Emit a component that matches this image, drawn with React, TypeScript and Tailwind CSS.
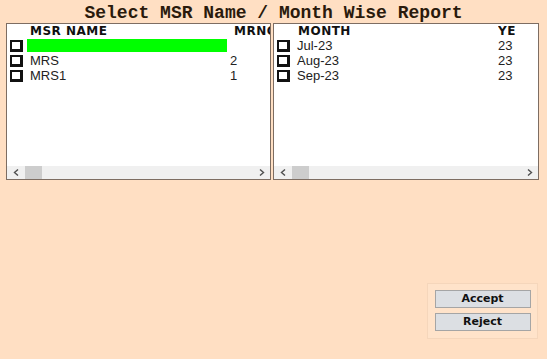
import React from "react";

const Check = () => (
  <div className="w-[13px] h-[12px] shrink-0 bg-white border-2 border-[#111] border-r-[3px] border-b-[3px]" />
);

const ScrollBar = () => (
  <div className="h-[13px] bg-[#f0f0f0] flex items-center">
    <svg width="7" height="7" viewBox="0 0 7 7" className="ml-[6px] shrink-0">
      <path d="M5 0.5 L1.5 3.5 L5 6.5" fill="none" stroke="#505050" strokeWidth="1.4" />
    </svg>
    <div className="h-[13px] bg-[#cdcdcd] w-[17px] ml-[5px] shrink-0" />
    <div className="flex-1" />
    <svg width="7" height="7" viewBox="0 0 7 7" className="mr-[5px] shrink-0">
      <path d="M2 0.5 L5.5 3.5 L2 6.5" fill="none" stroke="#505050" strokeWidth="1.4" />
    </svg>
  </div>
);

const hdr = "font-['DejaVu_Sans',sans-serif] font-bold text-[12px] tracking-[0.5px] text-[#111] leading-[14px] whitespace-nowrap shrink-0";
const cell = "font-['Liberation_Sans',Arial,sans-serif] text-[13px] text-[#222] leading-[15px] whitespace-nowrap";

export default function App() {
  const left = [
    { name: "", val: "", green: true },
    { name: "MRS", val: "2" },
    { name: "MRS1", val: "1" },
  ];
  const right = [
    { m: "Jul-23", y: "23" },
    { m: "Aug-23", y: "23" },
    { m: "Sep-23", y: "23" },
  ];
  return (
    <div className="w-[547px] h-[359px] bg-[#ffdfc3] flex flex-col overflow-hidden">
      <div className="h-[23px] pt-[4px] text-center font-['Liberation_Mono','Courier_New',monospace] font-bold text-[18px] leading-[18px] text-[#2a1a0c] whitespace-nowrap">
        Select MSR Name / Month Wise Report
      </div>
      <div className="flex pl-[6px] gap-[2px]">
        {/* left panel */}
        <div className="w-[265px] h-[157px] bg-white border border-[#7d6d62] flex flex-col overflow-hidden">
          <div className="flex h-[14px] items-center">
            <div className={`${hdr} pl-[23px] w-[227px]`}>MSR NAME</div>
            <div className={`${hdr}`}>MRNO</div>
          </div>
          {left.map((r, i) => (
            <div key={i} className="flex h-[15px] items-center pl-[3px]">
              <Check />
              <div className={`ml-[4px] w-[200px] h-[13px] shrink-0 flex items-center ${r.green ? "bg-[#00ff00]" : ""}`}>
                <span className={`${cell} pl-[3px]`}>{r.name}</span>
              </div>
              <span className={`${cell} ml-[3px]`}>{r.val}</span>
            </div>
          ))}
          <div className="flex-1" />
          <ScrollBar />
        </div>
        {/* right panel */}
        <div className="w-[266px] h-[157px] bg-white border border-[#7d6d62] flex flex-col overflow-hidden">
          <div className="flex h-[14px] items-center">
            <div className={`${hdr} pl-[24px] w-[224px]`}>MONTH</div>
            <div className={`${hdr} w-[17px] overflow-hidden`}>YEAR</div>
          </div>
          {right.map((r, i) => (
            <div key={i} className="flex h-[15px] items-center pl-[3px]">
              <Check />
              <div className="ml-[4px] w-[201px] h-[13px] shrink-0 flex items-center">
                <span className={`${cell} pl-[3px]`}>{r.m}</span>
              </div>
              <span className={`${cell} ml-[3px]`}>{r.y}</span>
            </div>
          ))}
          <div className="flex-1" />
          <ScrollBar />
        </div>
      </div>
      <div className="flex justify-end pr-[9px] mt-[103px]">
        <div className="w-[111px] h-[56px] bg-[#ffe3ca] border border-[#f5d6bb] flex flex-col items-center pt-[6px] gap-[5px]">
          <button className="w-[96px] h-[18px] bg-[#dcdfe3] border border-[#a5a5a5] font-['DejaVu_Sans',Verdana,sans-serif] font-bold text-[11px] leading-[16px] text-[#111]">
            Accept
          </button>
          <button className="w-[96px] h-[18px] bg-[#dcdfe3] border border-[#a5a5a5] font-['DejaVu_Sans',Verdana,sans-serif] font-bold text-[11px] leading-[16px] text-[#111]">
            Reject
          </button>
        </div>
      </div>
    </div>
  );
}
